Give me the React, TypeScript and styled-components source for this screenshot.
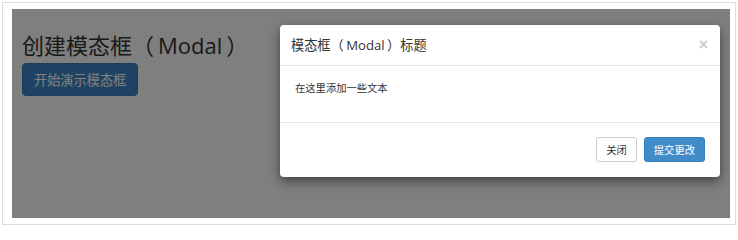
import React from "react";
import styled, { createGlobalStyle } from "styled-components";

const GlobalStyle = createGlobalStyle`
  html, body {
    margin: 0;
    padding: 0;
    background: #fff;
  }
  body {
    font-family: "Open Sans", "Noto Sans CJK SC", sans-serif;
    color: #333;
  }
`;

const Frame = styled.div`
  box-sizing: border-box;
  margin: 2px;
  width: 734px;
  height: 223px;
  border: 1px solid #ddd;
  padding: 6px 4px 6px 9px;
`;

const Stage = styled.div`
  position: relative;
  width: 718px;
  height: 209px;
  background: #fff;
  overflow: hidden;
`;

const Page = styled.div`
  padding: 23px 10px 0 10px;
`;

const Heading = styled.h2`
  margin: 0 0 5px;
  font-size: 22px;
  font-weight: 400;
  line-height: 26px;
  color: #333;
`;

// Latin word between full-width brackets, spaced like the YaHei rendering
const Latin = styled.span`
  margin: 0 0.18em;
`;

const LaunchButton = styled.button`
  box-sizing: border-box;
  height: 33px;
  padding: 0 11px;
  font-family: inherit;
  font-size: 13.2px;
  color: #fff;
  background: #3e87c6;
  border: 1px solid #357ebd;
  border-radius: 4px;
`;

const Backdrop = styled.div`
  position: absolute;
  inset: 0;
  background: rgba(0, 0, 0, 0.5);
`;

const Dialog = styled.div`
  position: absolute;
  left: 268px;
  top: 16px;
  width: 440px;
  background: #fff;
  border-radius: 4px;
  box-shadow: 0 4px 11px rgba(0, 0, 0, 0.5);
`;

const Header = styled.div`
  display: flex;
  align-items: center;
  justify-content: space-between;
  height: 40px;
  padding: 0 12px 0 11px;
  border-bottom: 1px solid #e5e5e5;
`;

const Title = styled.h4`
  margin: 0;
  font-size: 13.2px;
  font-weight: 400;
  line-height: 18px;
  color: #333;
`;

const Close = styled.span`
  font-size: 16px;
  line-height: 1;
  font-weight: 700;
  color: #000;
  opacity: 0.2;
  font-family: "Liberation Sans", sans-serif;
`;

const Body = styled.div`
  padding: 15px 15px 26px;
  font-size: 10.3px;
  line-height: 15px;
  color: #333;
`;

const Footer = styled.div`
  display: flex;
  justify-content: flex-end;
  gap: 7px;
  padding: 14px 15px 15px;
  border-top: 1px solid #e5e5e5;
`;

const Button = styled.button<{ $primary?: boolean }>`
  box-sizing: border-box;
  height: 25px;
  padding: 0 9px;
  font-family: inherit;
  font-size: 10.3px;
  border-radius: 3px;
  border: 1px solid ${(p) => (p.$primary ? "#357ebd" : "#ccc")};
  background: ${(p) => (p.$primary ? "#428bca" : "#fff")};
  color: ${(p) => (p.$primary ? "#fff" : "#333")};
`;

export default function App() {
  return (
    <>
      <GlobalStyle />
      <Frame>
        <Stage>
          <Page>
            <Heading>
              创建模态框（<Latin>Modal</Latin>）
            </Heading>
            <LaunchButton>开始演示模态框</LaunchButton>
          </Page>
          <Backdrop />
          <Dialog>
            <Header>
              <Title>
                模态框（<Latin>Modal</Latin>）标题
              </Title>
              <Close>×</Close>
            </Header>
            <Body>在这里添加一些文本</Body>
            <Footer>
              <Button>关闭</Button>
              <Button $primary>提交更改</Button>
            </Footer>
          </Dialog>
        </Stage>
      </Frame>
    </>
  );
}
